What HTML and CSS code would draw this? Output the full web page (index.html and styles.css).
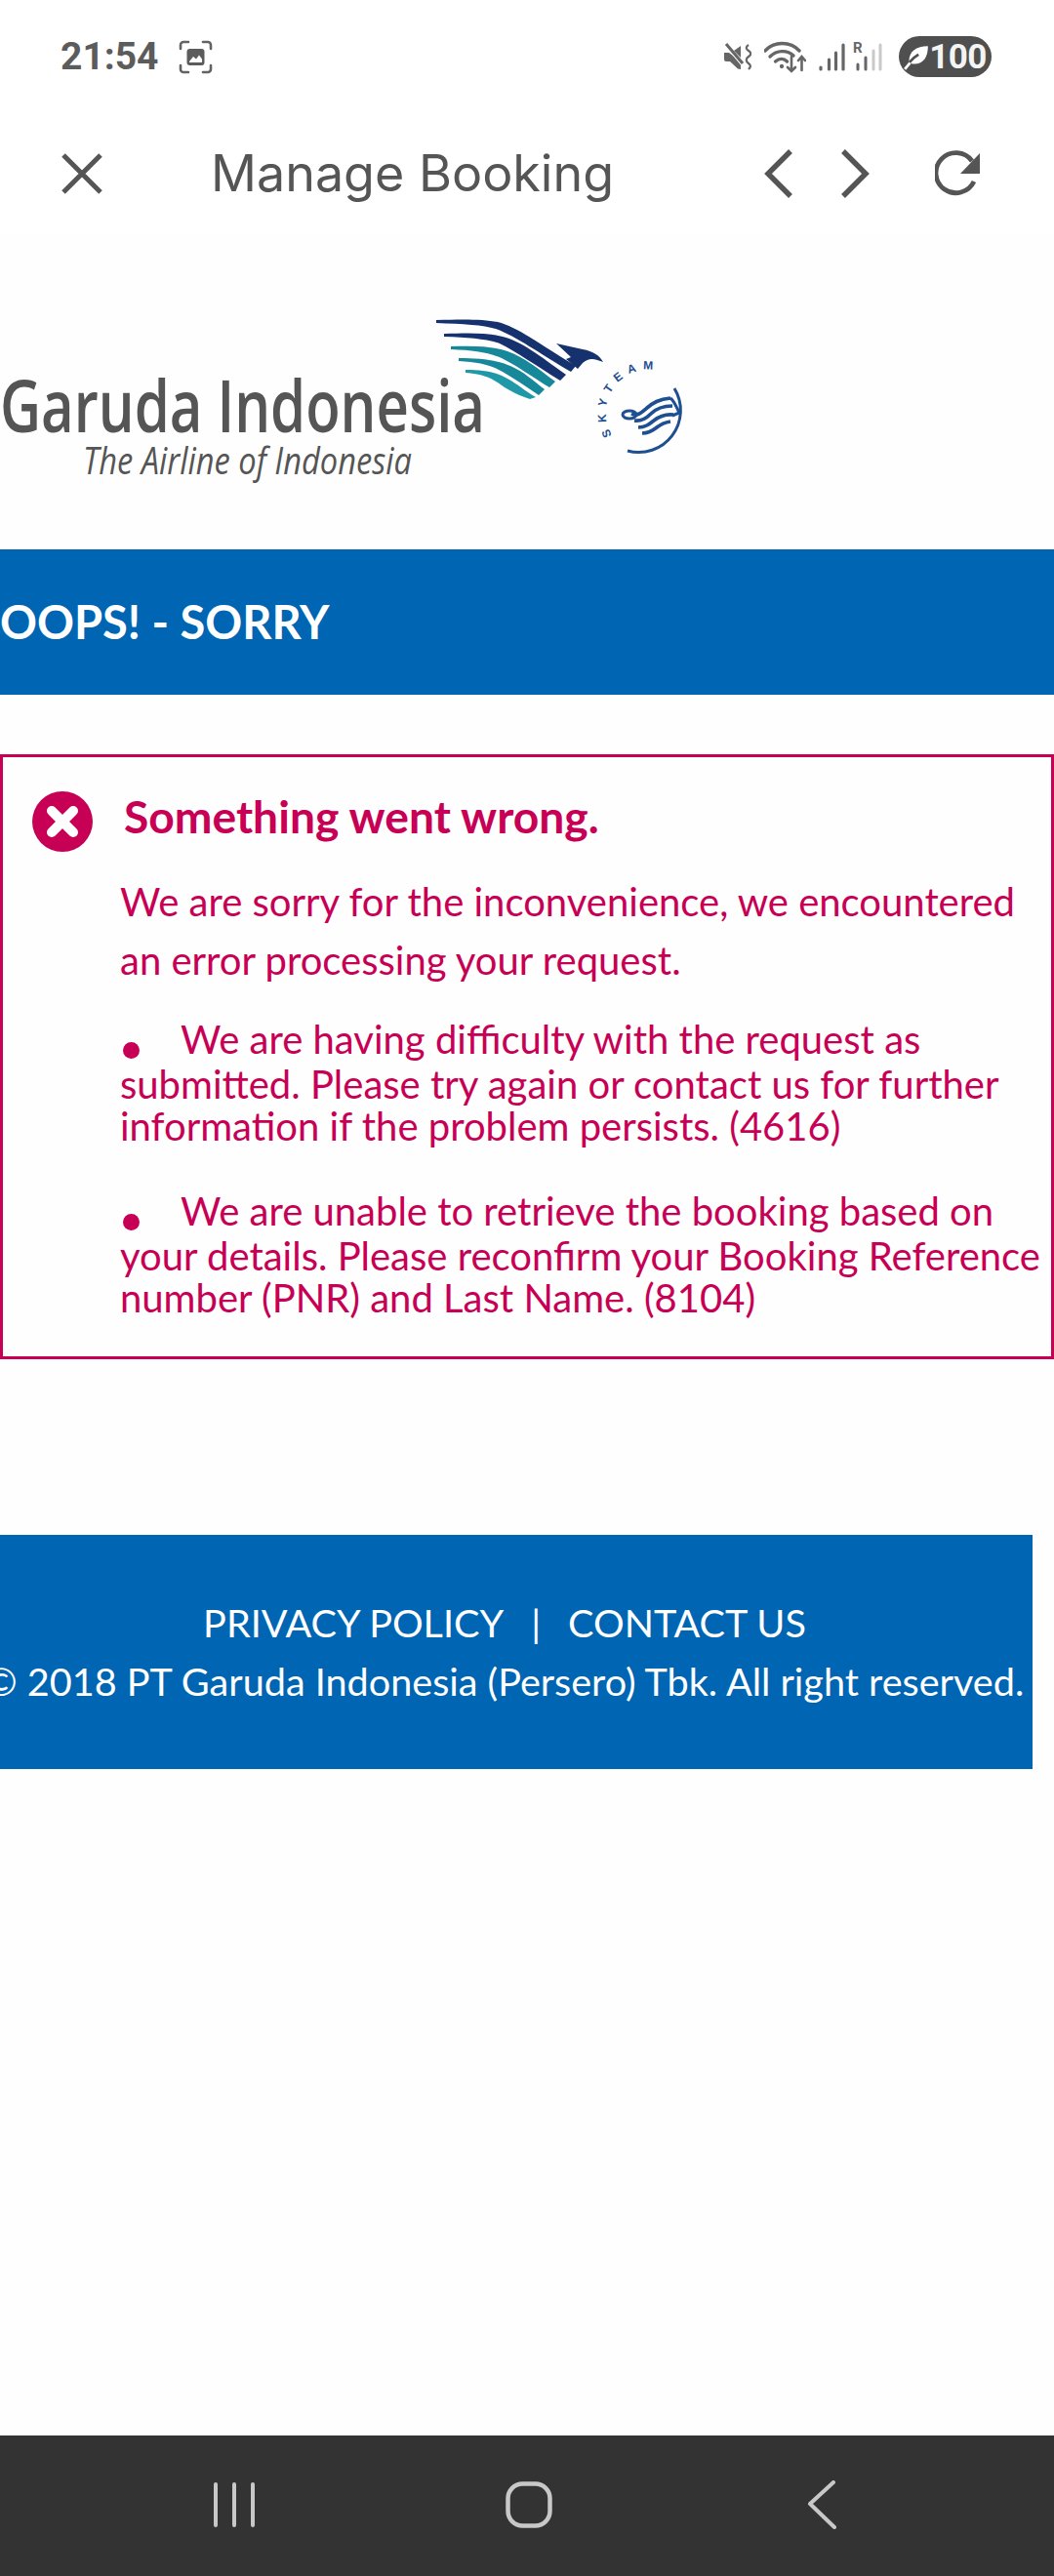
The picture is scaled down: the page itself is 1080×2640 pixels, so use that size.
FILE: index.html
```html
<!DOCTYPE html>
<html lang="en">
<head>
<meta charset="utf-8">
<title>Manage Booking</title>
<link rel="stylesheet" href="styles.css">
</head>
<body>
<div class="screen">
  <div class="status">
    <div class="status-left">
      <span class="time">21:54</span>
      <svg class="shot" width="35" height="35" viewBox="0 0 35 35" fill="none">
        <path d="M2 9V5a3 3 0 0 1 3-3h5M25 2h5a3 3 0 0 1 3 3v4M33 26v4a3 3 0 0 1-3 3h-5M10 33H5a3 3 0 0 1-3-3v-4" stroke="#636363" stroke-width="2.6" stroke-linecap="round"/>
        <rect x="8.5" y="9" width="18" height="17" rx="3" fill="#5c5c5c"/>
        <path d="M11 22l4-5 3 2.5 3-4 3 4V23H11z" fill="#fff"/>
      </svg>
    </div>
    <div class="status-right">
      <svg class="ic-mute" width="29" height="29" viewBox="0 0 29 29">
        <path d="M1 10h5l4 3 8 8v6l-3-.5L7 19H3a2 2 0 0 1-2-2z" fill="#666"/>
        <path d="M11 8l7-5v12z" fill="#666"/>
        <path d="M2 2l18 22" stroke="#fff" stroke-width="1.5"/>
        <path d="M3 1l17 20" stroke="#666" stroke-width="3"/>
        <path d="M26 2c-3 2-3 4 0 6s3 4 0 6-3 5 0 7 2 4 0 6" fill="none" stroke="#666" stroke-width="2.2"/>
      </svg>
      <svg class="ic-wifi" width="43" height="33" viewBox="0 0 43 33" fill="none" stroke="#666" stroke-width="3.4" stroke-linecap="round">
        <path d="M1 10C10 0 27 0 36 10"/>
        <path d="M6 16C13 9 24 9 30 15"/>
        <path d="M11.5 21c4-3.500 8.500-3.500 12 0"/>
        <circle cx="18" cy="26" r="1.400" fill="#666" stroke-width="1.500"/>
        <path d="M28 16v14M24 27l4 4 4-4" stroke-width="2.600"/>
        <path d="M38.500 30V17M35 20l3.500-4 3.500 4" stroke-width="2.600"/>
      </svg>
      <svg class="ic-sig" width="27" height="29" viewBox="0 0 27 29" stroke="#666" stroke-width="3.200" stroke-linecap="round">
        <path d="M2 25v2M10.500 17v10M17.500 10v17M25 2v25"/>
      </svg>
      <div class="sim">
        <span class="sim-r">R</span>
        <svg width="30" height="29" viewBox="0 0 30 29" stroke-width="3" stroke-linecap="round">
          <path d="M5 22v5M13 15v12" stroke="#666"/>
          <path d="M21 8v19M28 2v25" stroke="#c9c9c9"/>
        </svg>
      </div>
      <div class="batt">
        <svg width="26" height="28" viewBox="0 0 24 26">
          <path d="M5 17C5 8 12 3 23 3c0 10-4 17-13 17-2 0-4 0-5-3z" fill="#fff"/>
          <path d="M1 25c4-7 8-11 13-14" fill="none" stroke="#4f4f4f" stroke-width="2.500"/>
          <path d="M1 25l5-6" stroke="#fff" stroke-width="2.500"/>
        </svg>
        <span class="batt-n">100</span>
      </div>
    </div>
  </div>

  <div class="toolbar">
    <svg class="tb-x" width="42" height="42" viewBox="0 0 42 42" fill="none" stroke="#555" stroke-width="5">
      <path d="M2 2l38 38M40 2L2 40"/>
    </svg>
    <span class="tb-title">Manage Booking</span>
    <div class="tb-actions">
      <svg width="30" height="50" viewBox="0 0 30 50" fill="none" stroke="#555" stroke-width="5.500"><path d="M27 2L4 25l23 23"/></svg>
      <svg width="30" height="50" viewBox="0 0 30 50" fill="none" stroke="#555" stroke-width="5.500"><path d="M3 2l23 23L3 48"/></svg>
      <svg class="tb-reload" width="48" height="48" viewBox="0 0 48 48" fill="none">
        <path d="M40 32a20.500 20.500 0 1 1-2-21" stroke="#555" stroke-width="4.800"/>
        <path d="M46 3v21H26z" fill="#555"/>
      </svg>
    </div>
  </div>

  <svg class="logo" width="1080" height="323" viewBox="0 240 1080 323">
    <text class="logo-name" x="0" y="443" textLength="497" lengthAdjust="spacingAndGlyphs">Garuda Indonesia</text>
    <text class="logo-tag" x="85" y="486" textLength="337" lengthAdjust="spacingAndGlyphs">The Airline of Indonesia</text>
    <path d="M447 328C475 327 495 327 510 330 530 335 552 352 590 375L585 381C552 362 530 345 508 337 495 333 475 332 447 331Z" fill="#16326e"/>
    <path d="M455 342C482 341 500 341 515 345 535 350 552 364 580 384L574 390C548 374 530 361 512 352 497 347 480 346 455 345Z" fill="#16326e"/>
    <path d="M462 355C488 354 505 355 520 360 537 366 550 377 569 391L563 397C545 386 530 375 514 367 500 361 485 359 462 358Z" fill="#17879a"/>
    <path d="M470 367C492 367 510 369 523 375 537 381 546 390 558 399L552 405C539 396 527 388 515 381 503 374 490 371 470 370Z" fill="#17879a"/>
    <path d="M477 379C495 379 508 381 520 388 531 394 538 401 549 407L543 409C530 405 518 398 510 392 501 386 492 383 477 382Z" fill="#1f98a8"/>
    <path d="M570 352L597 358C608 360 614 364 618 371L612 369C606 367 602 368 597 372L592 378 580 368 585 366Z" fill="#16326e"/>
    <path id="skyArc" class="sky-none" d="M627.200 446.200A44.500 44.500 0 0 1 695 390"/>
    <text class="logo-sky"><textPath href="#skyArc">SKYTEAM</textPath></text>
    <g class="sky" transform="translate(3 0)">
      <path d="M688 398A43 43 0 0 1 640 462" fill="none" stroke="#1d4f92" stroke-width="3"/>
      <path d="M644 424c6 3 10-1 16-6s12-9 24-10M647 431c7 1 12-2 17-7s11-8 22-8M651 438c7 0 11-3 16-7s11-7 20-6M655 444c6 0 10-2 15-6s8-5 14-6" fill="none" stroke="#1d4f92" stroke-width="3.600"/>
      <ellipse cx="642" cy="425" rx="7" ry="4" fill="none" stroke="#1d4f92" stroke-width="3"/>
      <path d="M684 408c4 3 6 9 9 15l-7 3" fill="none" stroke="#1d4f92" stroke-width="3"/>
    </g>
  </svg>

  <div class="oops">OOPS! - SORRY</div>

  <div class="error">
    <div class="error-head">
      <svg class="error-ic" width="62" height="62" viewBox="0 0 62 62">
        <circle cx="31" cy="31" r="31" fill="#c70055"/>
        <path d="M20 20l22 22M42 20L20 42" stroke="#fff" stroke-width="10" stroke-linecap="round"/>
      </svg>
      <h1 class="error-title">Something went wrong.</h1>
    </div>
    <p class="error-lead">We are sorry for the inconvenience, we encountered an error processing your request.</p>
    <p class="error-item"><span class="dot"></span>We are having difficulty with the request as submitted. Please try again or contact us for further information if the problem persists. (4616)</p>
    <p class="error-item"><span class="dot"></span>We are unable to retrieve the booking based on your details. Please reconfirm your Booking Reference number (PNR) and Last Name. (8104)</p>
  </div>

  <div class="footer">
    <div class="foot-links"><span>PRIVACY POLICY</span><span class="foot-sep">|</span><span>CONTACT US</span></div>
    <div class="foot-copy">© 2018 PT Garuda Indonesia (Persero) Tbk. All right reserved.</div>
  </div>

  <div class="spacer"></div>

  <div class="navbar">
    <svg width="44" height="48" viewBox="0 0 44 48" stroke="#c8c8c8" stroke-width="4" stroke-linecap="round">
      <path d="M3 3v42M22 3v42M41 3v42"/>
    </svg>
    <svg width="48" height="48" viewBox="0 0 48 48" fill="none" stroke="#c8c8c8" stroke-width="4.500">
      <rect x="2.500" y="2.500" width="43" height="43" rx="15"/>
    </svg>
    <svg class="nav-back" width="30" height="50" viewBox="0 0 30 50" fill="none" stroke="#c8c8c8" stroke-width="4" stroke-linecap="round" stroke-linejoin="round">
      <path d="M27 2L3 24l25 24"/>
    </svg>
  </div>
</div>
</body>
</html>
```
FILE: styles.css
```css
* { box-sizing: border-box; }
html, body { margin: 0; padding: 0; background: #fff; }
.screen { width: 1080px; height: 2640px; display: flex; flex-direction: column; overflow: hidden; background: #fefefe; }

.status { height: 116px; flex: none; display: flex; align-items: center; justify-content: space-between; padding: 0 64px 0 62px; background: #fff; }
.status-left { display: flex; align-items: center; gap: 20px; }
.time { font: 700 39px/1 Roboto, sans-serif; color: #5c5c5c; }
.status-right { display: flex; align-items: center; gap: 13px; }
.sim { position: relative; width: 30px; height: 29px; margin-left: -5px; }
.sim svg { display: block; }
.sim-r { position: absolute; left: 0; top: -2px; font: 700 15px/1 Roboto, sans-serif; color: #666; }
.batt { width: 95px; height: 42px; margin-left: 4px; border-radius: 21px; background: #4f4f4f; display: flex; align-items: center; justify-content: center; gap: 0; }
.batt-n { font: 700 35px/1 Roboto, sans-serif; color: #f4f4f4; letter-spacing: -0.5px; }

.toolbar { height: 124px; flex: none; display: flex; align-items: center; padding: 0 74px 0 63px; background: #fff; }
.tb-title { margin-left: 111px; font: 400 52px/1 Inter, sans-serif; color: #555; }
.tb-actions { margin-left: auto; display: flex; align-items: center; gap: 48px; }
.tb-reload { margin-left: 19px; }

.logo { display: block; flex: none; }
.logo-name { font: 600 74px "Open Sans", sans-serif; fill: #555; }
.logo-tag { font: italic 500 38px "Open Sans", sans-serif; fill: #555; }
.logo-sky { font: 700 12px "Liberation Sans", sans-serif; fill: #1d4f92; letter-spacing: 6.5px; }
.sky-none { fill: none; }

.oops { height: 149px; flex: none; background: #0065b3; color: #fff; font: 700 47px/149px Lato, sans-serif; white-space: nowrap; }

.error { flex: none; margin-top: 61px; height: 620px; border: 3px solid #c70055; color: #c70055; font-family: Lato, sans-serif; padding: 35px 0 0 30px; }
.error-head { display: flex; align-items: flex-start; gap: 32px; }
.error-ic { flex: none; }
.error-title { margin: 0; font: 700 46.2px/50px Lato, sans-serif; }
.error-lead { margin: 21px 0 0 90px; font-size: 40px; line-height: 60px; }
.error-item { margin: 27px 0 0 90px; font-size: 40px; line-height: 43px; }
.error-item + .error-item { margin-top: 41px; }
.error-item::first-line { line-height: 49px; }
.dot { display: inline-block; width: 17px; height: 17px; margin: 0 42px 0 3px; border-radius: 50%; background: #c70055; vertical-align: -5px; }

.footer { flex: none; margin-top: 180px; width: 1058px; height: 240px; background: #0065b3; color: #fff; font-family: Lato, sans-serif; font-size: 39.6px; padding: 0 24px 0 0; display: flex; flex-direction: column; align-items: center; justify-content: center; gap: 12px; white-space: nowrap; }
.foot-links { display: flex; gap: 28px; line-height: 48px; }
.foot-copy { line-height: 48px; }

.spacer { flex: 1; background: #fefefe; }

.navbar { flex: none; height: 144px; background: #333; display: flex; align-items: center; padding: 0 0 2px 218px; gap: 256px; }
.nav-back { margin-left: 5px; }
```
